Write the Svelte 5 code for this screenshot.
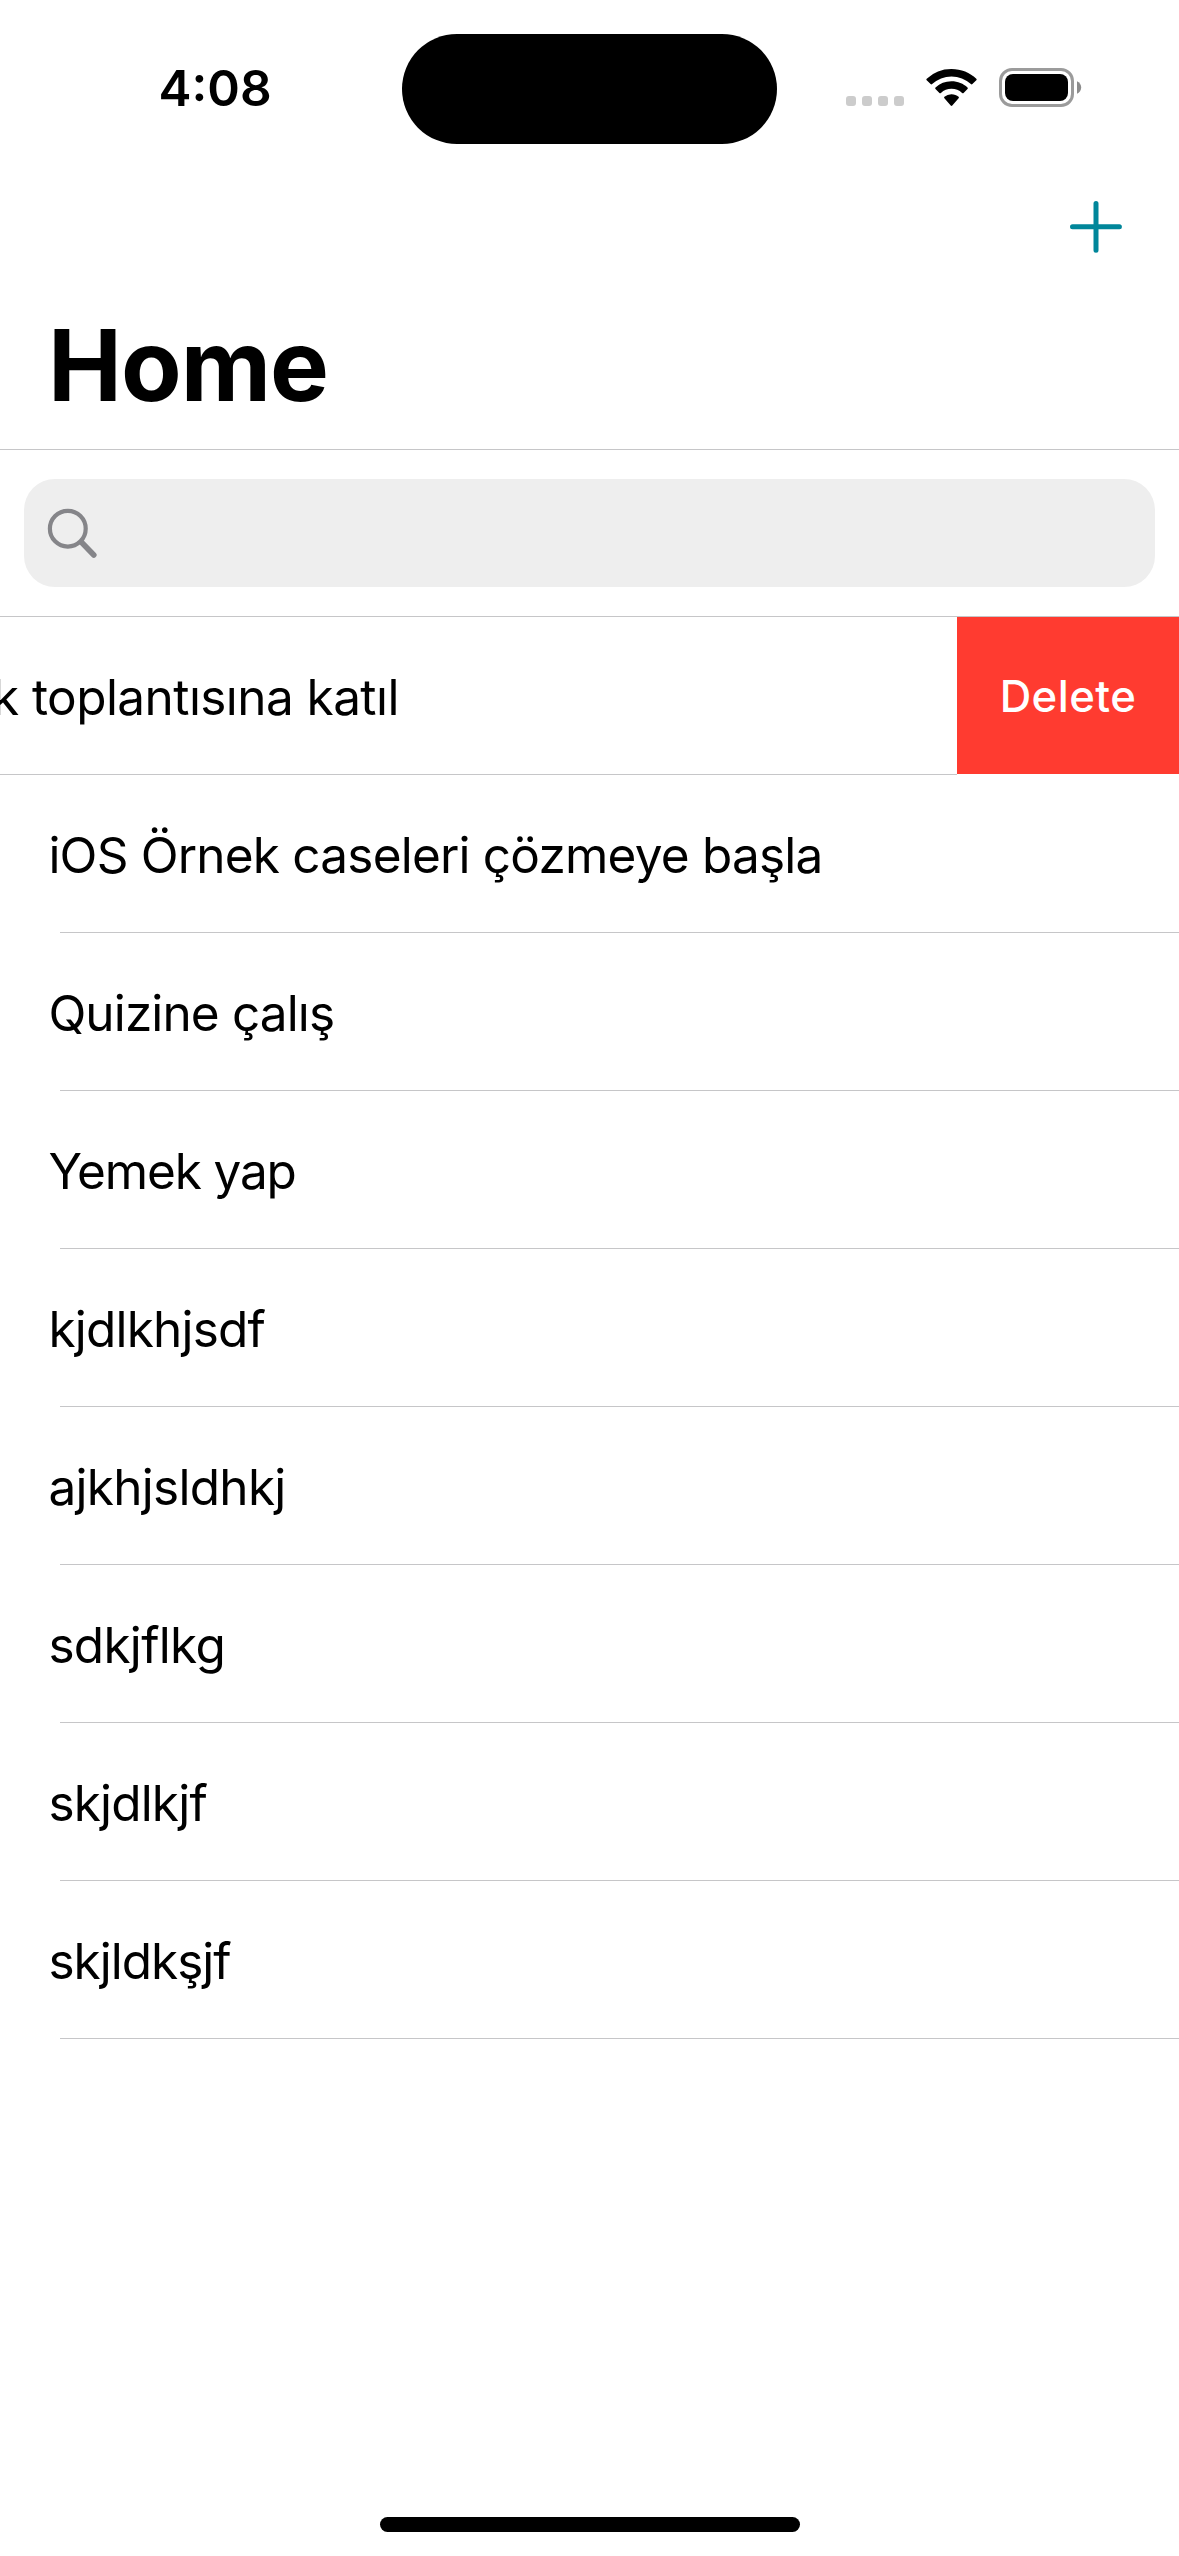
<script>
  // Each label carries its own tracking, in pixels.
  const swiped = { label: 'k toplantısına katıl', tracking: -0.57 };
  const tasks = [
    { label: 'iOS Örnek caseleri çözmeye başla', tracking: -0.8 },
    { label: 'Quizine çalış', tracking: -0.87 },
    { label: 'Yemek yap', tracking: -1.15 },
    { label: 'kjdlkhjsdf', tracking: -0.8 },
    { label: 'ajkhjsldhkj', tracking: -0.71 },
    { label: 'sdkjflkg', tracking: -0.71 },
    { label: 'skjdlkjf', tracking: -0.82 },
    { label: 'skjldkşjf', tracking: -1 }
  ];
</script>

<div class="screen">
  <header class="status">
    <time>4:08</time>
    <div class="island"></div>
    <svg class="indicators" width="240" height="44" viewBox="844 66 240 44">
      <g fill="#ccc">
        <rect x="846" y="96" width="10" height="10" rx="3" />
        <rect x="862" y="96" width="10" height="10" rx="3" />
        <rect x="878" y="96" width="10" height="10" rx="3" />
        <rect x="894" y="96" width="10" height="10" rx="3" />
      </g>
      <path d="M951.5 69c9.700 0 18.500 3.700 24.800 9.700.5.500.5 1 0 1.500l-3.900 3.900c-.5.500-1 .5-1.500 0a28.300 28.300 0 0 0-38.800 0c-.5.500-1 .5-1.500 0l-3.900-3.900c-.5-.5-.5-1 0-1.500a36 36 0 0 1 24.800-9.700z" />
      <path d="M951.5 81.300c6.300 0 12 2.400 16 6.200.5.500.5 1 0 1.500l-3.900 3.900c-.5.500-1 .5-1.500 0a15.600 15.600 0 0 0-21.200 0c-.5.500-1 .5-1.500 0l-3.900-3.900c-.5-.5-.5-1 0-1.500a23.500 23.500 0 0 1 16-6.200z" />
      <path d="M951.5 94.300c2.800 0 5.300 1 7.100 2.500.5.500.5 1 0 1.500l-6.300 7.300c-.5.500-1.100.5-1.600 0l-6.300-7.300c-.5-.5-.5-1 0-1.500a10.800 10.800 0 0 1 7.100-2.500z" />
      <rect x="1000.500" y="69.500" width="72" height="36" rx="11.500" fill="none" stroke="#9b9b9b" stroke-width="3" />
      <rect x="1005" y="74" width="63" height="27" rx="8" />
      <path d="M1077 81.200c2.500 1 4.200 3.600 4.200 6.300s-1.700 5.300-4.200 6.300z" fill="#8c8c8c" />
    </svg>
  </header>

  <nav>
    <button class="add" aria-label="Add">
      <svg width="54" height="54" viewBox="0 0 54 54">
        <path d="M27 3.500v46.700M3.500 26.850h46.900" stroke="#00869a" stroke-width="5" stroke-linecap="round" />
      </svg>
    </button>
    <h1>Home</h1>
  </nav>

  <div class="search-bar">
    <div class="field">
      <svg width="54" height="54" viewBox="0 0 54 54" fill="none" stroke="#858589" stroke-linecap="round">
        <circle cx="21.800" cy="22.700" r="17.900" stroke-width="4.200" />
        <path d="M35.500 36.300l12.300 12.700" stroke-width="5.600" />
      </svg>
    </div>
  </div>

  <ul>
    <li class="swiped">
      <span style:letter-spacing="{swiped.tracking}px">{swiped.label}</span>
      <button class="delete">Delete</button>
    </li>
    {#each tasks as task}
      <li><span style:letter-spacing="{task.tracking}px">{task.label}</span></li>
    {/each}
  </ul>

  <footer><div class="home-indicator"></div></footer>
</div>

<style>
  :global(body) {
    background: #fff;
  }

  .screen {
    display: flex;
    flex-direction: column;
    width: 1179px;
    height: 2556px;
    overflow: hidden;
    background: #fff;
    color: #000;
    font-family: Inter, 'Liberation Sans', sans-serif;
  }

  button {
    padding: 0;
    border: 0;
    background: none;
    font: inherit;
  }

  svg {
    display: block;
  }

  .status {
    display: grid;
    grid-template-columns: 402px 375px 1fr;
    height: 177px;
    box-sizing: border-box;
    padding-top: 34px;
  }

  .status time {
    padding: 24px 0 0 158.5px;
    font-size: 49.5px;
    font-weight: 600;
    line-height: 60px;
  }

  .island {
    height: 110px;
    border-radius: 55px;
    background: #000;
  }

  .indicators {
    margin: 32px 0 0 67px;
  }

  nav {
    display: flex;
    flex-direction: column;
    box-sizing: border-box;
    height: 273px;
    padding-top: 23px;
    border-bottom: 1px solid #c6c6c8;
  }

  .add {
    align-self: flex-end;
    margin-right: 56px;
  }

  h1 {
    margin: 51px 0 0 48px;
    font-size: 99px;
    font-weight: 700;
    line-height: 120px;
    letter-spacing: -1px;
  }

  .search-bar {
    padding: 29px 24px;
    border-bottom: 1px solid #c6c6c8;
  }

  .field {
    display: flex;
    align-items: center;
    height: 108px;
    padding-left: 22px;
    border-radius: 31px;
    background: #eee;
  }

  ul {
    flex: 1;
    margin: 0;
    padding: 0;
    list-style: none;
  }

  li {
    display: flex;
    flex-direction: column;
    height: 158px;
    font-size: 49.5px;
    line-height: 160px;
    white-space: pre;
  }

  li span {
    height: 157px;
    padding-left: 48.400px;
  }

  li::after {
    content: '';
    height: 1px;
    margin-left: 60px;
    background: #c6c6c8;
  }

  .swiped {
    display: grid;
    grid-template-columns: 957px 222px;
    grid-template-rows: 157px 1px;
  }

  /* The row has slid left, so its label starts off the screen's edge. */
  .swiped span {
    padding: 0;
    margin-left: -8px;
  }

  .swiped::after {
    margin-left: 0;
  }

  .delete {
    background: #ff3b30;
    color: #fff;
    font-size: 43.700px;
    font-weight: 500;
    line-height: 160px;
    letter-spacing: 0.460px;
  }

  footer {
    padding-bottom: 24px;
  }

  .home-indicator {
    width: 420px;
    height: 15px;
    margin: 0 auto 0 380px;
    border-radius: 8px;
    background: #000;
  }
</style>
